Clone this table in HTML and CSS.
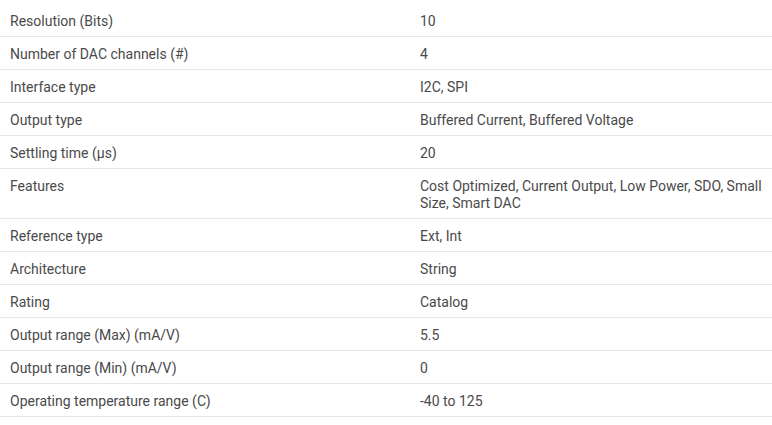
FILE: index.html
```html
<!DOCTYPE html>
<html>
<head>
<meta charset="utf-8">
<link rel="stylesheet" href="styles.css">
</head>
<body>
<table class="specs">
<tbody>
<tr><td class="k">Resolution (Bits)</td><td class="v">10</td></tr>
<tr><td class="k">Number of DAC channels (#)</td><td class="v">4</td></tr>
<tr><td class="k">Interface type</td><td class="v">I2C, SPI</td></tr>
<tr><td class="k">Output type</td><td class="v">Buffered Current, Buffered Voltage</td></tr>
<tr><td class="k">Settling time (µs)</td><td class="v">20</td></tr>
<tr><td class="k">Features</td><td class="v">Cost Optimized, Current Output, Low Power, SDO, Small Size, Smart DAC</td></tr>
<tr><td class="k">Reference type</td><td class="v">Ext, Int</td></tr>
<tr><td class="k">Architecture</td><td class="v">String</td></tr>
<tr><td class="k">Rating</td><td class="v">Catalog</td></tr>
<tr><td class="k">Output range (Max) (mA/V)</td><td class="v">5.5</td></tr>
<tr><td class="k">Output range (Min) (mA/V)</td><td class="v">0</td></tr>
<tr><td class="k">Operating temperature range (C)</td><td class="v">-40 to 125</td></tr>
</tbody>
</table>
</body>
</html>
```
FILE: styles.css
```css
html, body {
  margin: 0;
  padding: 0;
  background: #fff;
}
body {
  font-family: Roboto, "Liberation Sans", sans-serif;
  font-size: 14px;
  color: #4a4a4a;
}
.specs {
  width: 772px;
  border-collapse: collapse;
  margin-top: 4px;
}
.specs td {
  padding: 9px 10px 6px;
  line-height: 17px;
  vertical-align: top;
  border-bottom: 1px solid #e6e6e6;
  text-align: left;
}
.specs .k {
  width: 390px;
}
.specs .v {
  padding-right: 8px;
}
```
